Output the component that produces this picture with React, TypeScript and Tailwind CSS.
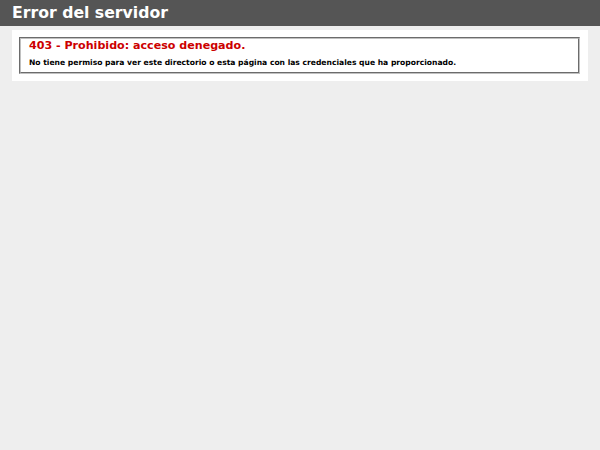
export default function App() {
  return (
    <div className="min-h-[450px] bg-[#eeeeee] font-['DejaVu_Sans',Verdana,sans-serif]">
      <div className="h-[26px] bg-[#555555] px-[12px] flex items-center">
        <h1 className="text-[15.7px] font-bold text-white leading-none">Error del servidor</h1>
      </div>
      <div className="pl-[12px] pt-[4px]">
        <div className="w-[576px] bg-white p-[7px] pr-[8px]">
          <div className="h-[37px] border-2 border-[#c0c0c0] [border-style:groove] pl-[8px]">
            <h2 className="text-[11.1px] font-bold text-[#cc0000] leading-[14px]">
              403 - Prohibido: acceso denegado.
            </h2>
            <h3 className="mt-[5px] text-[7.6px] font-bold text-black leading-[10px]">
              No tiene permiso para ver este directorio o esta página con las credenciales que ha proporcionado.
            </h3>
          </div>
        </div>
      </div>
    </div>
  );
}
